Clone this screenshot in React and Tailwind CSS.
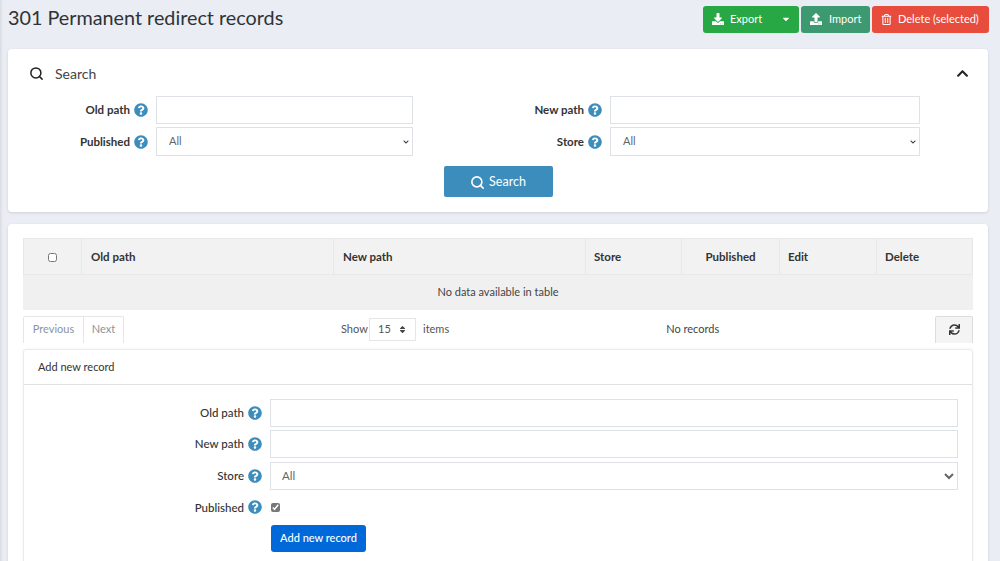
import { FaDownload, FaUpload, FaRegTrashAlt, FaChevronUp, FaChevronDown, FaQuestionCircle, FaSync, FaSort, FaCaretDown } from "react-icons/fa";
import { Search } from "lucide-react";

const Help = () => <FaQuestionCircle className="text-[14px] text-[#3c8dbc] shrink-0" />;

const SearchField = ({ label, children }) => (
    <div className="flex items-center">
        <div className="flex items-center justify-end gap-[4px] w-[127px] shrink-0 pr-2">
            <span className="text-[11.5px] font-bold text-[#333]">{label}</span>
            <Help />
        </div>
        {children}
    </div>
);

const SmallSelect = ({ width }) => (
    <div className={`relative ${width} h-[29px]`}>
        <select className="appearance-none w-full h-full bg-white border border-[#dee2e6] pl-[12px] text-[11px] text-[#666]">
            <option>All</option>
        </select>
        <FaChevronDown className="absolute right-[4px] top-[12px] text-[6px] text-[#333]" />
    </div>
);

const FormField = ({ label, children }) => (
    <div className="flex items-center">
        <div className="flex items-center justify-end gap-[4px] w-[246px] shrink-0 pr-[8px]">
            <span className="text-[11.5px] font-medium text-[#333]">{label}</span>
            <Help />
        </div>
        {children}
    </div>
);

const headers = [
    { label: "Old path", w: "w-[252px]", pad: "pl-[9px]" },
    { label: "New path", w: "w-[252px]", pad: "pl-[9px]" },
    { label: "Store", w: "w-[96px]", pad: "pl-[8px]" },
    { label: "Published", w: "w-[98px]", pad: "text-center" },
    { label: "Edit", w: "w-[97px]", pad: "pl-[8px]" },
    { label: "Delete", w: "", pad: "pl-[8px]" },
];

export default function App() {
    return (
        <div className="bg-[#eaedf3] h-[561px] overflow-hidden pl-2 pr-3 font-['Lato',sans-serif] text-[#333] shadow-[inset_3px_0_3px_-2px_rgba(0,0,0,0.1)]">
            <header className="flex items-center justify-between h-[49px] pb-[11px]">
                <h1 className="text-[19.8px] leading-none mb-[3px] text-[#2f3337]">301 Permanent redirect records</h1>
                <div className="flex gap-[2px] mr-[-1px] text-[11px] text-white">
                    <div className="flex items-center w-[96px] h-[27px] bg-[#28a745] rounded-[3px] pl-[9px]">
                        <FaDownload className="text-[12px]" />
                        <span className="ml-[6px]">Export</span>
                        <FaCaretDown className="ml-auto mr-[8px] text-[10px]" />
                    </div>
                    <div className="flex items-center w-[69px] h-[27px] bg-[#3d9970] rounded-[3px] pl-[9px]">
                        <FaUpload className="text-[12px]" />
                        <span className="ml-[7px]">Import</span>
                    </div>
                    <div className="flex items-center w-[117px] h-[27px] bg-[#e74c3c] rounded-[3px] pl-[9px]">
                        <FaRegTrashAlt className="text-[11px]" />
                        <span className="ml-[6px]">Delete (selected)</span>
                    </div>
                </div>
            </header>

            <section className="bg-white rounded-[4px] shadow-[0_1px_3px_rgba(0,0,0,0.12)] h-[163px] mb-[12px] px-[21px] pt-[16px]">
                <div className="flex items-center h-[16px] mb-[15px]">
                    <Search size={15} strokeWidth={2.4} className="text-[#222]" />
                    <span className="ml-[11px] text-[14px] text-[#444]">Search</span>
                    <FaChevronUp className="ml-auto mr-[-2px] text-[13px] text-[#222]" />
                </div>
                <div className="flex">
                    <div className="flex flex-col gap-[3px] w-[454px] shrink-0">
                        <SearchField label="Old path">
                            <input className="w-[257px] h-[28px] bg-white border border-[#dee2e6]" />
                        </SearchField>
                        <SearchField label="Published">
                            <SmallSelect width="w-[257px]" />
                        </SearchField>
                    </div>
                    <div className="flex flex-col gap-[3px]">
                        <SearchField label="New path">
                            <input className="w-[310px] h-[28px] bg-white border border-[#dee2e6]" />
                        </SearchField>
                        <SearchField label="Store">
                            <SmallSelect width="w-[310px]" />
                        </SearchField>
                    </div>
                </div>
                <div className="flex justify-center mt-[10px]">
                    <button className="flex items-center justify-center gap-[4px] w-[109px] h-[31px] pt-[2px] bg-[#3c8dbc] rounded-[2px] text-[12.5px] text-white">
                        <Search size={15} strokeWidth={2.6} />
                        Search
                    </button>
                </div>
            </section>

            <section className="bg-white rounded-[4px] shadow-[0_1px_3px_rgba(0,0,0,0.12)] h-[400px] px-[15px] pt-[14px]">
                <table className="w-[950px] table-fixed border-collapse text-[11.5px]">
                    <thead>
                        <tr className="h-[36px] bg-[#f2f2f2] border border-[#e8e8e8]">
                            <th className="w-[58px] border-r border-[#e8e8e8]">
                                <input type="checkbox" className="align-middle w-[9px] h-[9px]" />
                            </th>
                            {headers.map(h => (
                                <th key={h.label} className={`${h.w} ${h.pad} ${h.pad === "text-center" ? "" : "text-left"} border-r border-[#e8e8e8] font-bold text-[#333]`}>
                                    {h.label}
                                </th>
                            ))}
                        </tr>
                    </thead>
                    <tbody>
                        <tr className="h-[35px] bg-[#f0f0f0] border-x border-[#f0f0f0]">
                            <td colSpan={7} className="text-center text-[11px] text-[#444]">No data available in table</td>
                        </tr>
                    </tbody>
                </table>

                <div className="flex items-start mt-[6px] h-[27px] text-[11px]">
                    <div className="flex h-[27px] border border-b-0 border-[#e4e7ea] rounded-t-[2px] text-[#8a949c]">
                        <span className="flex items-center justify-center w-[60px] border-r border-[#e4e7ea]">Previous</span>
                        <span className="flex items-center justify-center w-[39px]">Next</span>
                    </div>
                    <div className="flex items-center ml-[217px] h-[27px] text-[#555]">
                        <span className="w-[28px]">Show</span>
                        <div className="flex items-center justify-between w-[47px] h-[23px] mt-[1px] border border-[#e4e7ea] px-[8px]">
                            <span>15</span>
                            <FaSort className="text-[9px] text-[#444]" />
                        </div>
                        <span className="ml-[7px]">items</span>
                    </div>
                    <span className="flex items-center h-[27px] ml-[217px] text-[#444]">No records</span>
                    <div className="flex items-center justify-center ml-auto w-[38px] h-[27px] bg-[#f4f4f4] border border-b-0 border-[#dddddd] rounded-t-[2px]">
                        <FaSync className="text-[11px] text-[#333]" />
                    </div>
                </div>

                <div className="mt-[6px] border border-[#e8eaec] rounded-t-[3px] shadow-[0_0_3px_rgba(0,0,0,0.06)]">
                    <div className="flex items-center h-[35px] pl-[14px] pt-[1px] border-b border-[#dfe2e5] text-[11px] text-[#333]">
                        Add new record
                    </div>
                    <div className="flex flex-col pt-[14px] pb-[10px] pr-[14px]">
                        <FormField label="Old path">
                            <input className="flex-1 h-[28px] bg-white border border-[#dee2e6]" />
                        </FormField>
                        <div className="mt-[3px]">
                            <FormField label="New path">
                                <input className="flex-1 h-[28px] bg-white border border-[#dee2e6]" />
                            </FormField>
                        </div>
                        <div className="mt-[4px]">
                            <FormField label="Store">
                                <select className="flex-1 h-[28px] bg-white border border-[#dee2e6] pl-[7px] text-[11.5px] text-[#666]">
                                    <option>All</option>
                                </select>
                            </FormField>
                        </div>
                        <div className="mt-[9px]">
                            <FormField label="Published">
                                <input type="checkbox" defaultChecked className="w-[9px] h-[9px] ml-[1px] accent-[#777]" />
                            </FormField>
                        </div>
                        <div className="pl-[247px] mt-[8px]">
                            <button className="w-[95px] h-[27px] bg-[#0069d9] rounded-[3px] text-[11px] font-medium text-white">Add new record</button>
                        </div>
                    </div>
                </div>
            </section>
        </div>
    );
}
